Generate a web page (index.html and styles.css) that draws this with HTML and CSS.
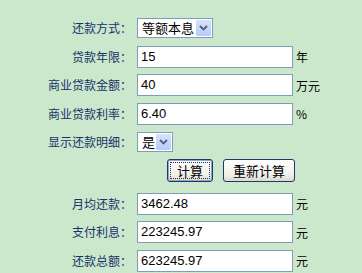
FILE: index.html
```html
<!DOCTYPE html>
<html>
<head>
<meta charset="utf-8">
<link rel="stylesheet" href="styles.css">
</head>
<body>
<div class="form">
  <div class="row">
    <span class="label">还款方式：</span>
    <div class="select sel-wide"><span class="sel-text">等额本息</span><span class="sel-btn"><svg width="9" height="6" viewBox="0 0 9 6"><path d="M1 1 L4.5 4.5 L8 1" fill="none" stroke="#4d6185" stroke-width="1.8"/></svg></span></div>
  </div>
  <div class="row">
    <span class="label">贷款年限：</span>
    <div class="input">15</div><span class="unit">年</span>
  </div>
  <div class="row">
    <span class="label">商业贷款金额：</span>
    <div class="input">40</div><span class="unit">万元</span>
  </div>
  <div class="row">
    <span class="label">商业贷款利率：</span>
    <div class="input">6.40</div><span class="unit">%</span>
  </div>
  <div class="row">
    <span class="label">显示还款明细：</span>
    <div class="select sel-small"><span class="sel-text">是</span><span class="sel-btn"><svg width="9" height="6" viewBox="0 0 9 6"><path d="M1 1 L4.5 4.5 L8 1" fill="none" stroke="#4d6185" stroke-width="1.8"/></svg></span></div>
  </div>
  <div class="row buttons">
    <button class="btn btn-focus">计算</button>
    <button class="btn">重新计算</button>
  </div>
  <div class="results">
    <div class="row">
      <span class="label">月均还款：</span>
      <div class="input">3462.48</div><span class="unit">元</span>
    </div>
    <div class="row">
      <span class="label">支付利息：</span>
      <div class="input">223245.97</div><span class="unit">元</span>
    </div>
    <div class="row">
      <span class="label">还款总额：</span>
      <div class="input">623245.97</div><span class="unit">元</span>
    </div>
  </div>
</div>
</body>
</html>
```

FILE: styles.css
```css
html, body {
  margin: 0;
  padding: 0;
}
body {
  background: #cce8cc;
  font-family: "Noto Sans CJK SC", "Liberation Sans", sans-serif;
  font-size: 12px;
  color: #000;
}
.form {
  padding-top: 14px;
}
.row {
  display: flex;
  align-items: center;
  height: 28.5px;
}
.label {
  width: 137px;
  box-sizing: border-box;
  padding-right: 5px;
  text-align: right;
  color: #17326a;
  font-size: 12px;
  line-height: 14px;
}
.input {
  width: 156px;
  height: 22px;
  box-sizing: border-box;
  border: 1px solid #7f9db9;
  background: #fff;
  font-family: "Liberation Sans", sans-serif;
  font-size: 13px;
  line-height: 20px;
  padding-left: 3px;
  color: #000;
}
.unit {
  margin-left: 3px;
  font-size: 12px;
  color: #000;
}
.select {
  display: flex;
  align-items: stretch;
  height: 20px;
  box-sizing: border-box;
  border: 1px solid #7f9db9;
  background: #fff;
}
.sel-wide { width: 76px; }
.sel-small { width: 36px; }
.sel-text {
  flex: 1;
  font-size: 13px;
  line-height: 18px;
  padding-left: 4px;
  color: #000;
  white-space: nowrap;
}
.sel-btn {
  width: 15px;
  margin: 1px;
  background: linear-gradient(#d6e2fc, #b7cbf8);
  border-radius: 1px;
  display: flex;
  align-items: center;
  justify-content: center;
}
.buttons {
  padding-left: 167px;
  gap: 10px;
}
.btn {
  height: 23px;
  box-sizing: border-box;
  border: 1px solid #1d3a63;
  border-radius: 3px;
  background: linear-gradient(#ffffff, #f1f0ea 70%, #dcd9cc);
  font-family: "Noto Sans CJK SC", sans-serif;
  font-size: 13px;
  line-height: 18px;
  padding: 0 9px;
  color: #000;
  margin: 0;
}
.btn-focus {
  box-shadow: inset 0 0 0 1px #8aa6d8;
  outline: 1px dotted #333;
  outline-offset: -4px;
}
.results {
  padding-top: 4.5px;
}
```
